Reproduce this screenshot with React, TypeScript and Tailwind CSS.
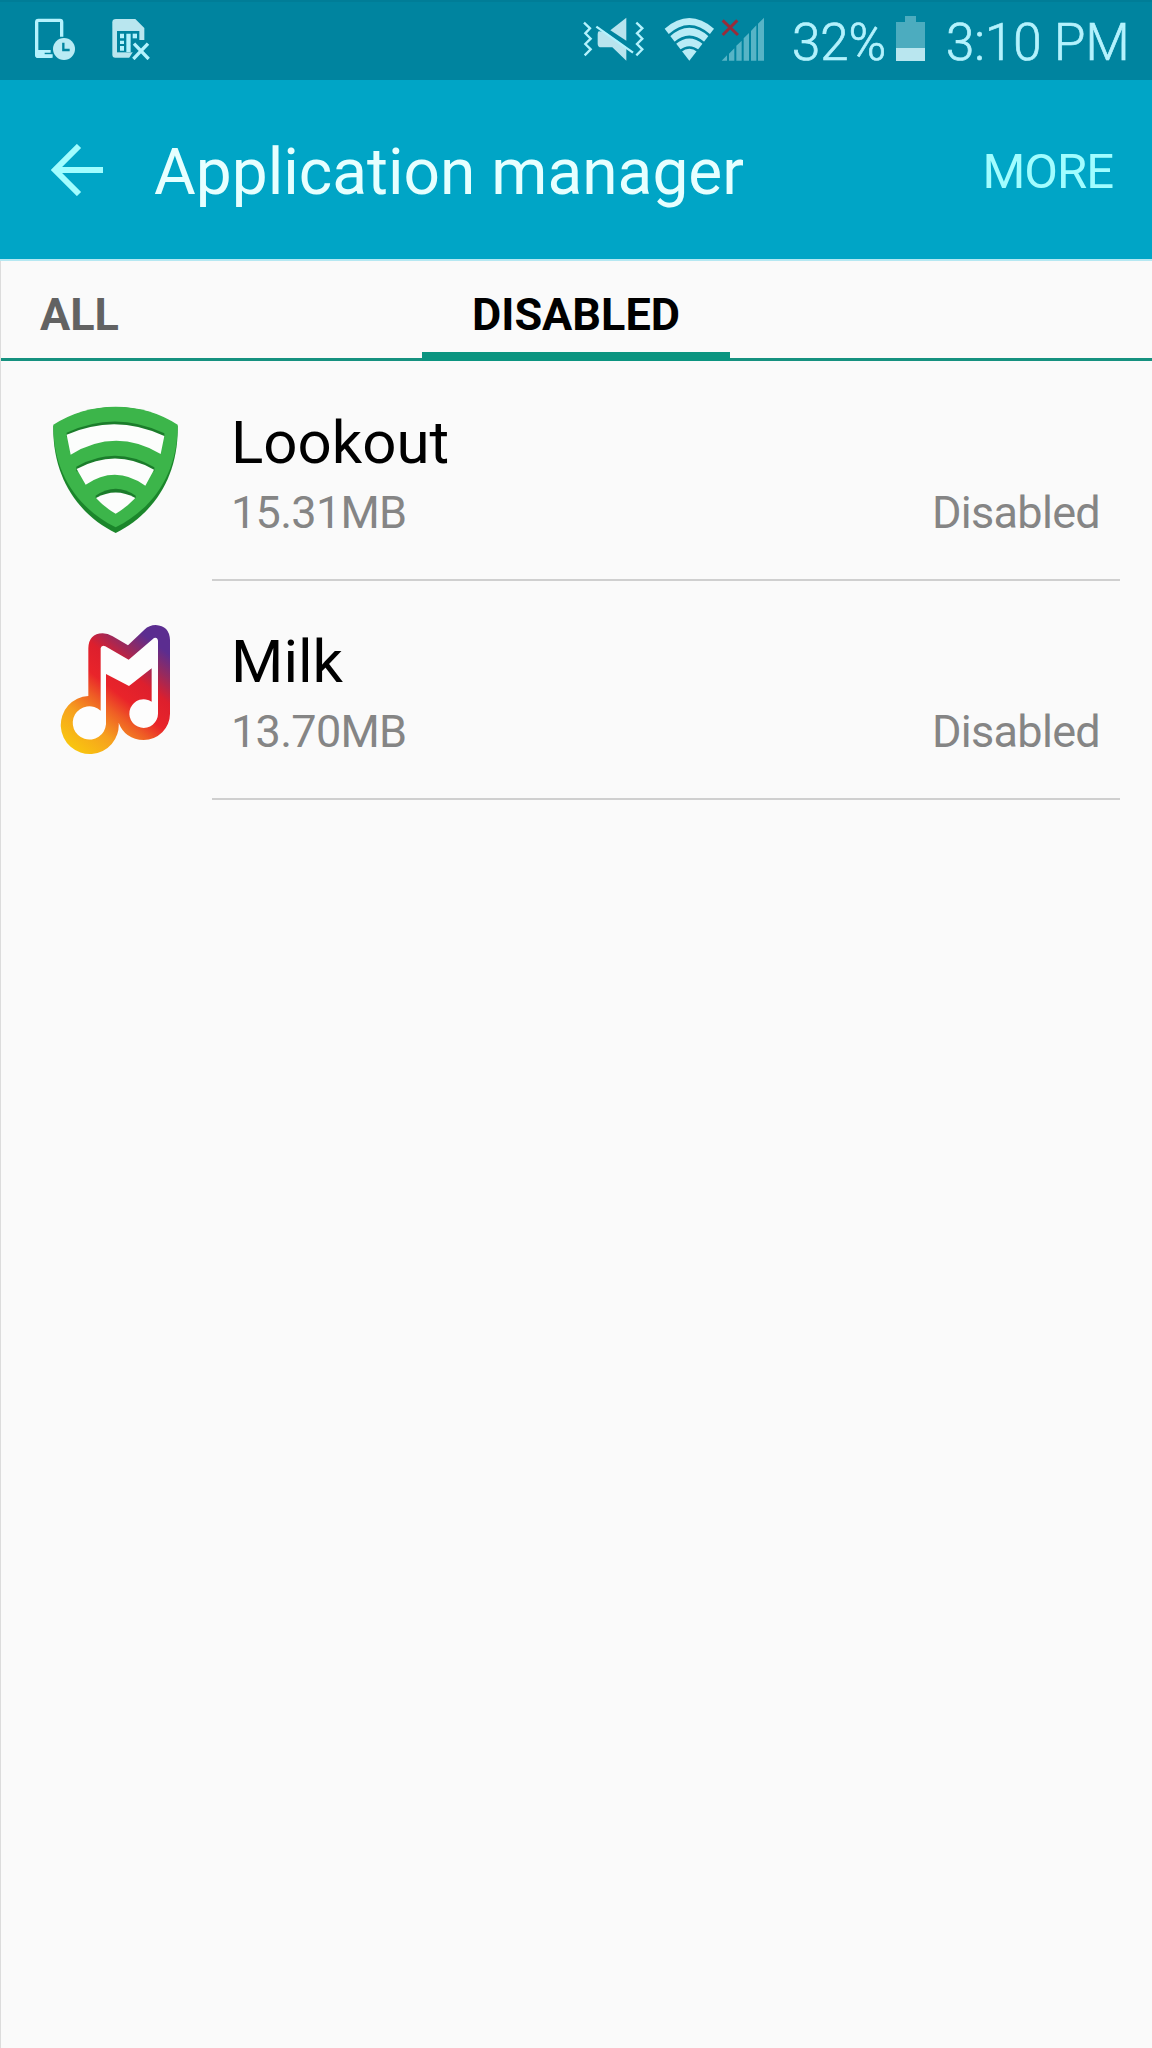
import type { ReactNode } from "react";

type AppItem = {
  id: number;
  name: string;
  size: string;
  status: string;
  icon: ReactNode;
};

const DeviceClockIcon = () => (
  <svg className="h-[42px] w-10" viewBox="105 54 120 126" fill="none">
    <path
      d="M185 110V66q0-5-5-5H115q-5 0-5 5v98q0 5 5 5h40"
      stroke="#b4f2fd"
      strokeWidth="10"
    />
    <path d="M108 150h44v8h-18v5h24v10h-44q-8 0-8-8z" fill="#b4f2fd" />
    <circle cx="192" cy="147" r="33" fill="#b9ebf4" />
    <path d="M190 128v22h19" stroke="#00849f" strokeWidth="7" />
  </svg>
);

const SimErrorIcon = () => (
  <svg className="h-[42px] w-[39px]" viewBox="336 54 117 126" fill="none">
    <path
      d="M348 57h58l27 27v82q0 7-8 7h-79q-9 0-9-9V67q0-10 11-10z"
      fill="#b9e6ef"
    />
    <path d="M351 93h67v64h-67z" fill="#00849f" />
    <path
      d="M360 101h12v14h-12zM379 101h13v55h-13zM360 122h12v10h-12zM360 138h12v14h-12z"
      fill="#b4f2fd"
    />
    <path d="M392 132l10-12h34v56h-50l14-22z" fill="#00849f" />
    <path d="M398 101h13v14h-13z" fill="#b4f2fd" />
    <path d="M402 131l44 46M444 131l-44 46" stroke="#b4f2fd" strokeWidth="10" />
  </svg>
);

const MuteVibrateIcon = () => (
  <svg className="h-[46px] w-[63px]" viewBox="36 48 189 138" fill="none">
    <path d="M169 53v69l-48-31z" fill="#b9e4ee" />
    <path d="M86 94l18 1 65 47v40l-42-40H94q-11 0-11-11V103q0-6 3-9z" fill="#b9e4ee" />
    <path d="M79 80l110 78" stroke="#b4f2fd" strokeWidth="7" />
    <path
      d="M42 68l18 17-14 15 16 16-16 16 16 16-18 18M199 68l18 17-16 15 16 16-16 16 16 16-18 18"
      stroke="#b4f2fd"
      strokeWidth="7"
    />
  </svg>
);

const WifiIcon = () => (
  <svg className="h-[46px] w-[51px]" viewBox="282 48 153 138" fill="none">
    <path d="M284 86Q358 22 432 86L358 182z" fill="#b9ecf6" />
    <path
      d="M296 107Q358 51 420 107M314 130Q358 92 402 130M331 153Q358 132 385 153"
      stroke="#00849f"
      strokeWidth="8"
    />
  </svg>
);

const NoSignalIcon = () => (
  <svg className="h-[46px] w-11" viewBox="453 48 132 138" fill="none">
    <path
      d="M455 182l16-16v16zM477 161l16-16v37h-16zM499 137l16-15v60h-16zM521 115l16-16v83h-16zM543 93l16-17v106h-16zM564 71l18-18v129h-18z"
      fill="#57b4c6"
    />
    <path d="M458 61l46 44M502 61l-44 44" stroke="#982c3b" strokeWidth="9" />
  </svg>
);

const LookoutIcon = () => (
  <svg className="h-[129px] w-[127px]" viewBox="36 45 381 387">
    <path
      d="M40 108Q125 51 227 51T413 108C416 255 345 370 227 429C108 370 37 255 40 108Z"
      fill="#1b862b"
    />
    <path
      d="M40 104Q125 50 227 50T413 104C414 244 343 354 227 412C110 354 38 244 40 104Z"
      fill="#3cb54a"
    />
    {/* shaded upper edges of the three cut-outs */}
    <g fill="#1b7c2b">
      <path d="M80 128Q227 60 373 130V142H80z" />
      <path d="M109 230Q227 164 343 232V244H109z" />
      <path d="M167 317Q227 275 287 317V325H167z" />
    </g>
    <path d="M80 134Q227 69 373 138L362 192Q227 112 92 194Z" fill="#fcfdfc" />
    <path d="M110 237Q227 173 342 239L316 287Q227 223 137 284Z" fill="#fcfdfc" />
    <path d="M168 324Q227 291 286 324Q256 355 227 371Q194 353 168 324Z" fill="#fcfdfc" />
  </svg>
);

const MilkIcon = () => (
  <svg className="h-[131px] w-28" viewBox="57 42 336 393">
    <defs>
      <linearGradient
        id="milk"
        gradientUnits="userSpaceOnUse"
        x1="95"
        y1="420"
        x2="365"
        y2="75"
      >
        <stop offset="0" stopColor="#f9c80e" />
        <stop offset="0.22" stopColor="#f6a01f" />
        <stop offset="0.38" stopColor="#ef5f25" />
        <stop offset="0.5" stopColor="#e9242a" />
        <stop offset="0.66" stopColor="#dd1f2d" />
        <stop offset="0.8" stopColor="#952a5f" />
        <stop offset="0.93" stopColor="#5b2d90" />
      </linearGradient>
    </defs>
    <path
      d="M145 258V115Q146 71 188 70Q203 70 218 79L264 106L313 59Q328 45 347 45Q388 47 390 90V311A79 79 0 0 1 311 390Q255 388 236 338A87 87 0 1 1 145 258Z"
      fill="url(#milk)"
    />
    <path
      d="M182 302V115Q184 104 196 109L266 149L342 84Q352 80 354 92V311A43 43 0 1 1 335 275V175L267 228L198 192V343A50 50 0 1 1 182 302Z"
      fill="#fdfdfd"
    />
  </svg>
);

const apps: AppItem[] = [
  { id: 1, name: "Lookout", size: "15.31MB", status: "Disabled", icon: <LookoutIcon /> },
  { id: 2, name: "Milk", size: "13.70MB", status: "Disabled", icon: <MilkIcon /> },
];

const StatusBar = () => (
  <div className="flex h-20 items-start border-t-2 border-[#007d97] bg-[#00849f] pl-[35px] text-[51px] leading-[60px] font-light text-[#b4f2fd]">
    <div className="flex gap-[37px] pt-4">
      <DeviceClockIcon />
      <SimErrorIcon />
    </div>
    <div className="ml-auto flex w-[570px] pt-[14px] [-webkit-text-stroke:0.7px_#b4f2fd]">
      <MuteVibrateIcon />
      <div className="ml-[19px]">
        <WifiIcon />
      </div>
      <div className="ml-1.5">
        <NoSignalIcon />
      </div>
      <span className="-mt-[3px] ml-[27px] w-[104px] whitespace-nowrap">32%</span>
      <div className="flex h-[45px] w-[29px] flex-col items-center">
        <div className="h-1.5 w-[11px] bg-[#4cacbf]" />
        <div className="w-full flex-1 bg-[#4cacbf]" />
        <div className="h-[13px] w-full bg-[#b9e6ef]" />
      </div>
      <span className="-mt-[3px] ml-[21px] whitespace-nowrap">3:10 PM</span>
    </div>
  </div>
);

const Header = () => (
  <header className="flex h-[181px] items-center border-b-2 border-[#b5e8f2] bg-[#00a5c6] pr-[39px] pl-[51px]">
    <button aria-label="Back">
      <svg className="h-[52px] w-[52px]" viewBox="0 0 52 52" fill="none">
        <path d="M28 2L4 26l24 24M4 26h48" stroke="#a1fdff" strokeWidth="6" />
      </svg>
    </button>
    <h1 className="mt-1.5 ml-[51px] text-[64px] leading-[76px] text-[#e6ffff]">
      Application manager
    </h1>
    <button className="mt-1 ml-auto text-[49px] leading-[60px] tracking-[-1px] text-[#a1fdff]">
      MORE
    </button>
  </header>
);

const Tabs = () => (
  <nav className="flex h-[100px] border-b-[3px] border-[#15917f] text-[45px] font-bold">
    <button className="w-[421px] pt-6 pl-[39px] text-left leading-[60px] text-[#626262]">
      <span className="block h-[73px]">ALL</span>
    </button>
    <button className="-mb-[3px] w-[308px] border-b-9 border-[#0b9480] pt-6 text-center leading-[60px] text-black">
      <span className="block h-[67px]">DISABLED</span>
    </button>
  </nav>
);

const AppRow = ({ app }: { app: AppItem }) => (
  <li className="flex h-[219px]">
    <div className="flex w-[211px] justify-center pt-[43px] pl-[17px]">{app.icon}</div>
    <div className="mr-8 flex-1 border-b-2 border-[#cfcfcf] pt-[46px] pr-5 pl-[19px] leading-[70px]">
      <div className="text-[60px] text-black">{app.name}</div>
      <div className="flex justify-between text-[45px] tracking-[-0.7px] text-[#858585]">
        <span>{app.size}</span>
        <span>{app.status}</span>
      </div>
    </div>
  </li>
);

export default function App() {
  return (
    <div className="flex h-[2048px] w-[1152px] flex-col overflow-hidden bg-[#fafafa] font-['Roboto',sans-serif]">
      <StatusBar />
      <Header />
      <main className="flex-1 border-l border-[#dcdcdc]">
        <Tabs />
        <ul className="pt-px">
          {apps.map((app) => (
            <AppRow key={app.id} app={app} />
          ))}
        </ul>
      </main>
    </div>
  );
}
